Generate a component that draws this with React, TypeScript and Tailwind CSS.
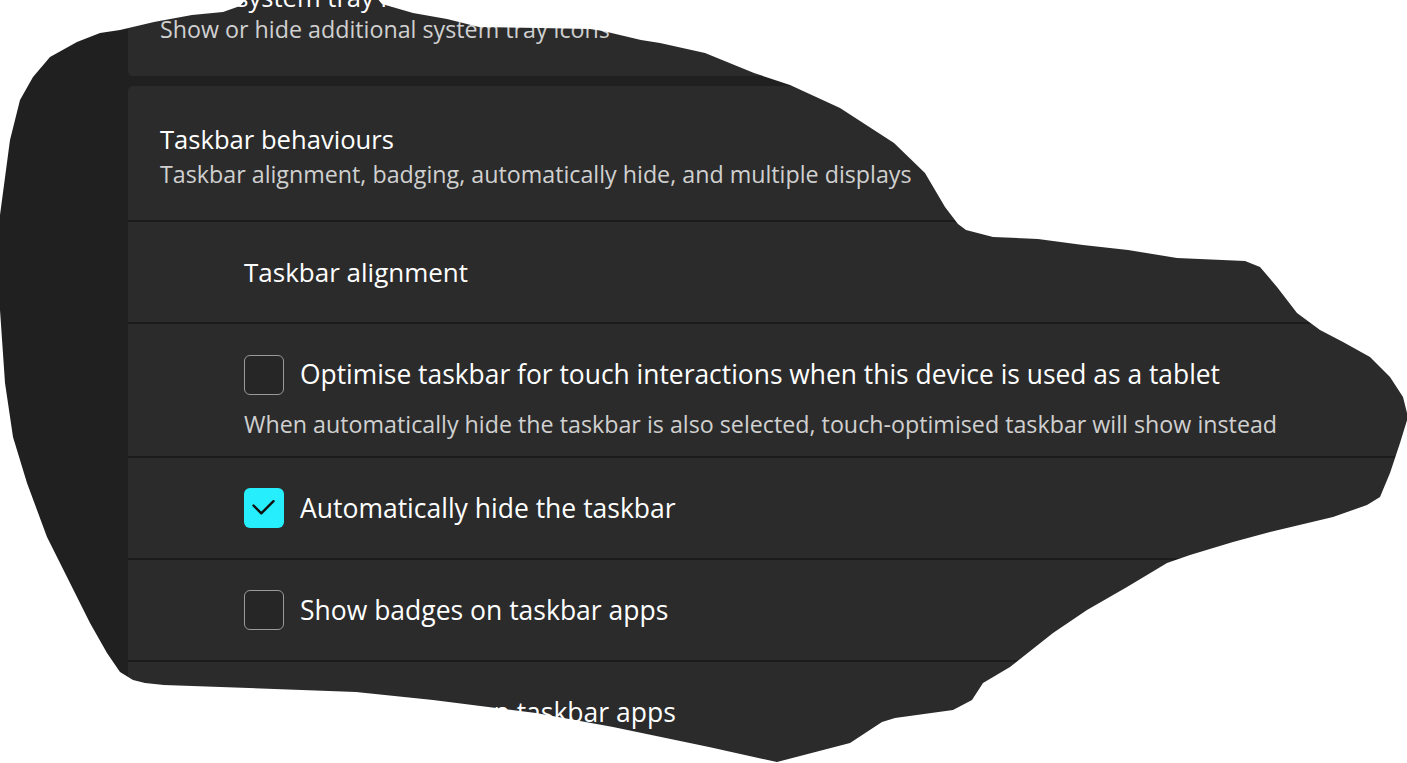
import React from "react";

const blob: [number, number][] = [
  [-3, 230], [0, 215], [10, 140], [20, 100], [33, 77], [50, 57], [77, 42], [100, 33], [120, 30],
  [154, 22], [192, 15], [223, 12], [240, 6], [248, -3], [376, -3], [382, 4], [413, 13],
  [447, 19], [479, 27], [540, 28], [590, 29], [603, 31], [641, 40], [660, 43], [705, 53], [754, 73],
  [790, 85], [840, 108], [894, 143], [925, 173], [945, 207], [958, 224], [966, 230],
  [993, 237], [1038, 239], [1083, 245], [1128, 250], [1177, 258], [1245, 261], [1260, 267],
  [1277, 287], [1297, 313], [1320, 330], [1343, 342], [1370, 357], [1390, 377], [1403, 397],
  [1408, 417], [1400, 443], [1390, 473], [1380, 497], [1367, 505], [1333, 517], [1270, 532],
  [1233, 542], [1190, 555], [1167, 563], [1127, 587], [1087, 610], [1053, 633], [1010, 667],
  [983, 683], [972, 700], [953, 710], [895, 718], [882, 722], [850, 743], [777, 762],
  [709, 747], [613, 727], [536, 713], [433, 700], [356, 692], [164, 685], [145, 683],
  [133, 680], [120, 672], [107, 653], [90, 623], [67, 577], [47, 537], [27, 483], [13, 437],
  [5, 383], [0, 310], [-3, 300],
];

const blobPath =
  "M-20 -20 H1430 V790 H-20 Z M" + blob.map(([x, y]) => `${x} ${y}`).join(" L") + " Z";

function Checkbox({ checked }: { checked?: boolean }) {
  if (checked) {
    return (
      <div className="w-[40px] h-[40px] shrink-0 rounded-[6px] bg-[#27eefc] flex items-center justify-center">
        <svg width="40" height="40" viewBox="0 0 40 40">
          <polyline
            points="9.5,17.5 17.3,25.3 29.5,13.2"
            fill="none"
            stroke="#111"
            strokeWidth="2.4"
            strokeLinecap="round"
            strokeLinejoin="round"
          />
        </svg>
      </div>
    );
  }
  return (
    <div className="w-[40px] h-[40px] shrink-0 rounded-[6px] border-[1.5px] border-[#9a9a9a] bg-[#262626]" />
  );
}

function CheckRow({ label, checked }: { label: string; checked?: boolean }) {
  return (
    <div className="h-[102px] border-t-2 border-[#1c1c1c] pl-[116px] flex items-center gap-[16px]">
      <Checkbox checked={checked} />
      <span className="text-[26.5px] leading-[30px] text-white whitespace-nowrap">{label}</span>
    </div>
  );
}

export default function App() {
  return (
    <div className="relative w-[1407px] h-[763px] overflow-hidden bg-[#202020] font-['Open_Sans','Noto_Sans',sans-serif]">
      <div className="flex flex-col pl-[128px] -mt-[15px]">
        {/* Card 1 */}
        <div className="rounded-b-[5px] bg-[#2b2b2b] pl-[32px] pb-[33px]">
          <div className="-mt-[2px] mb-[2px] text-[25.6px] leading-[30px] text-white whitespace-nowrap">
            Other system tray icons
          </div>
          <div className="text-[23.25px] leading-[28px] text-[#d0d0d0] whitespace-nowrap">
            Show or hide additional system tray icons
          </div>
        </div>

        {/* Card 2 */}
        <div className="mt-[10px] rounded-t-[5px] bg-[#2b2b2b] flex flex-col">
          <div className="pt-[39px] pb-[32px] pl-[32px]">
            <div className="text-[25.6px] leading-[30px] text-white whitespace-nowrap">
              Taskbar behaviours
            </div>
            <div className="mt-[5px] text-[23.25px] leading-[28px] text-[#d0d0d0] whitespace-nowrap">
              Taskbar alignment, badging, automatically hide, and multiple displays
            </div>
          </div>

          <div className="h-[102px] border-t-2 border-[#1c1c1c] pl-[116px] flex items-center">
            <span className="text-[26px] leading-[30px] text-white whitespace-nowrap">
              Taskbar alignment
            </span>
          </div>

          <div className="border-t-2 border-[#1c1c1c] pl-[116px] pt-[31px] pb-[18px]">
            <div className="flex items-center gap-[16px]">
              <Checkbox />
              <span className="-mt-[3px] text-[26.4px] leading-[30px] text-white whitespace-nowrap">
                Optimise taskbar for touch interactions when this device is used as a tablet
              </span>
            </div>
            <div className="mt-[15px] text-[23.25px] leading-[28px] text-[#d0d0d0] whitespace-nowrap">
              When automatically hide the taskbar is also selected, touch-optimised taskbar will show instead
            </div>
          </div>

          <CheckRow label="Automatically hide the taskbar" checked />
          <CheckRow label="Show badges on taskbar apps" />
          <CheckRow label="Show flashing on taskbar apps" />
        </div>
      </div>

      <svg
        className="absolute inset-0 pointer-events-none"
        width="1407"
        height="763"
        viewBox="0 0 1407 763"
      >
        <path d={blobPath} fill="#ffffff" fillRule="evenodd" />
      </svg>
    </div>
  );
}
